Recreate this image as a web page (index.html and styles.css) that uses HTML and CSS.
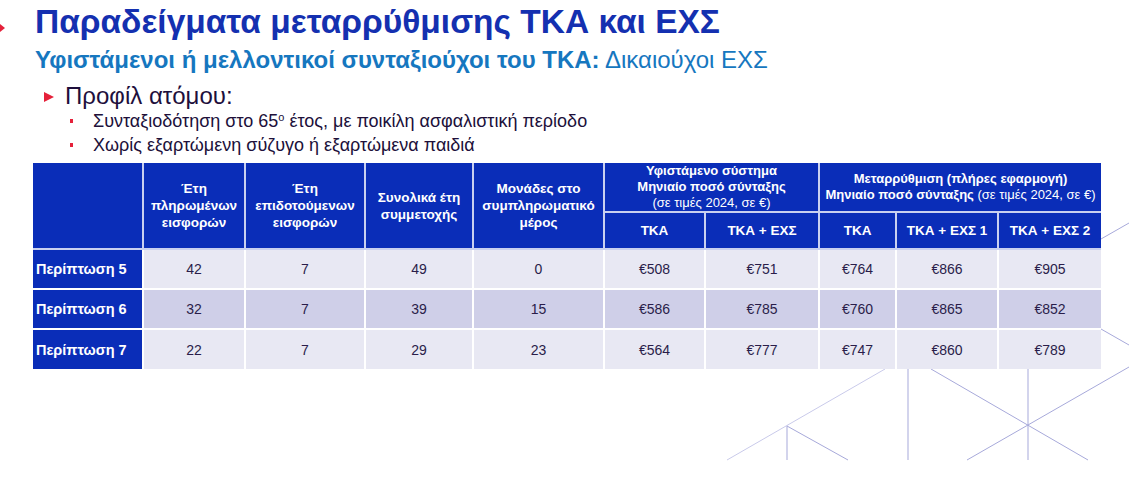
FILE: index.html
```html
<!DOCTYPE html>
<html lang="el">
<head>
<meta charset="utf-8">
<title>Παραδείγματα μεταρρύθμισης ΤΚΑ και ΕΧΣ</title>
<link rel="stylesheet" href="styles.css">
</head>
<body>
<div class="slide">
  <svg class="deco" width="1129" height="497" viewBox="0 0 1129 497" aria-hidden="true">
    <g stroke="#a7a9da" stroke-width="1" fill="none">
      <line x1="727" y1="460" x2="885" y2="369" stroke="#c9caea"/>
      <line x1="787" y1="426" x2="787" y2="460"/>
      <line x1="787" y1="426" x2="848" y2="460"/>
      <line x1="908" y1="369" x2="908" y2="460"/>
      <line x1="931" y1="369" x2="1088" y2="460"/>
      <line x1="967" y1="460" x2="1129" y2="367"/>
      <line x1="1028" y1="369" x2="1028" y2="460"/>
      <line x1="1101" y1="239" x2="1129" y2="223"/>
      <line x1="1101" y1="329" x2="1129" y2="345"/>
    </g>
  </svg>
  <div class="content">
    <header class="title-row">
      <span class="marker"></span>
      <h1 class="title">Παραδείγματα μεταρρύθμισης ΤΚΑ και ΕΧΣ</h1>
    </header>
    <p class="subtitle"><b>Υφιστάμενοι ή μελλοντικοί συνταξιούχοι του ΤΚΑ:</b> Δικαιούχοι ΕΧΣ</p>
    <div class="profile">
      <span class="tri"></span>
      <span>Προφίλ ατόμου:</span>
    </div>
    <ul class="bullets">
      <li>Συνταξιοδότηση στο 65<sup>ο</sup> έτος, με ποικίλη ασφαλιστική περίοδο</li>
      <li>Χωρίς εξαρτώμενη σύζυγο ή εξαρτώμενα παιδιά</li>
    </ul>
    <table class="grid">
      <colgroup>
        <col class="c1"><col class="c2"><col class="c3"><col class="c4"><col class="c5">
        <col class="c6"><col class="c7"><col class="c8"><col class="c9"><col class="c10">
      </colgroup>
      <thead>
        <tr class="h1">
          <th rowspan="2"></th>
          <th rowspan="2">Έτη<br>πληρωμένων<br>εισφορών</th>
          <th rowspan="2">Έτη<br>επιδοτούμενων<br>εισφορών</th>
          <th rowspan="2">Συνολικά έτη<br>συμμετοχής</th>
          <th rowspan="2">Μονάδες στο<br>συμπληρωματικό<br>μέρος</th>
          <th colspan="2" class="grp">Υφιστάμενο σύστημα<br>Μηνιαίο ποσό σύνταξης<br><span class="reg">(σε τιμές 2024, σε €)</span></th>
          <th colspan="3" class="grp">Μεταρρύθμιση (πλήρες εφαρμογή)<br>Μηνιαίο ποσό σύνταξης <span class="reg">(σε τιμές 2024, σε €)</span></th>
        </tr>
        <tr class="h2">
          <th>ΤΚΑ</th>
          <th>ΤΚΑ + ΕΧΣ</th>
          <th>ΤΚΑ</th>
          <th>ΤΚΑ + ΕΧΣ 1</th>
          <th>ΤΚΑ + ΕΧΣ 2</th>
        </tr>
      </thead>
      <tbody>
        <tr class="odd">
          <th>Περίπτωση 5</th>
          <td>42</td><td>7</td><td>49</td><td>0</td>
          <td>€508</td><td>€751</td><td>€764</td><td>€866</td><td>€905</td>
        </tr>
        <tr class="even">
          <th>Περίπτωση 6</th>
          <td>32</td><td>7</td><td>39</td><td>15</td>
          <td>€586</td><td>€785</td><td>€760</td><td>€865</td><td>€852</td>
        </tr>
        <tr class="odd">
          <th>Περίπτωση 7</th>
          <td>22</td><td>7</td><td>29</td><td>23</td>
          <td>€564</td><td>€777</td><td>€747</td><td>€860</td><td>€789</td>
        </tr>
      </tbody>
    </table>
  </div>
</div>
</body>
</html>
```

FILE: styles.css
```css
* { box-sizing: border-box; }
html, body { margin: 0; padding: 0; background: #fff; }
body { font-family: "Liberation Sans", Arial, sans-serif; color: #1e0f3c; }

.slide {
  position: relative;
  width: 1129px;
  height: 497px;
  overflow: hidden;
  background: #fff;
}

.deco {
  position: absolute;
  left: 0;
  top: 0;
}

.content {
  position: relative;
  padding-top: 4px;
}

.title-row {
  display: flex;
  align-items: center;
  height: 36px;
}

.marker {
  width: 0;
  height: 0;
  border-top: 4px solid transparent;
  border-bottom: 4px solid transparent;
  border-left: 5px solid #e5213a;
  margin-right: 30px;
  margin-top: 12px;
}

.title {
  margin: 0;
  font-size: 33.5px;
  line-height: 36px;
  font-weight: bold;
  color: #1430b0;
}

.subtitle {
  margin: 6px 0 0 35px;
  font-size: 24px;
  line-height: 28px;
  color: #1677bf;
}
.subtitle b { font-weight: bold; }

.profile {
  display: flex;
  align-items: center;
  gap: 11px;
  margin: 8px 0 0 44px;
  font-size: 24px;
  line-height: 28px;
  color: #1e0f3c;
}

.tri {
  width: 0;
  height: 0;
  border-top: 5.5px solid transparent;
  border-bottom: 5.5px solid transparent;
  border-left: 10px solid #e5213a;
  margin-top: 1px;
}

.bullets {
  list-style: none;
  margin: 0;
  padding: 0 0 0 70px;
  font-size: 18px;
  line-height: 23.5px;
  color: #20103a;
}
.bullets li::before {
  content: "";
  display: inline-block;
  width: 3px;
  height: 4px;
  background: #e5213a;
  margin-right: 20px;
  vertical-align: 4px;
}
.bullets sup {
  font-size: 11px;
  line-height: 0;
  vertical-align: 6px;
}

.grid {
  margin: 6px 0 0 33px;
  width: 1068px;
  border-collapse: collapse;
  table-layout: fixed;
}
.c1 { width: 110px; }
.c2 { width: 102px; }
.c3 { width: 120px; }
.c4 { width: 108px; }
.c5 { width: 131px; }
.c6 { width: 101px; }
.c7 { width: 114px; }
.c8 { width: 77px; }
.c9 { width: 102px; }
.c10 { width: 103px; }

.grid th, .grid td {
  border: 2px solid #fff;
  padding: 0;
  text-align: center;
}
.grid tr:first-child > * { border-top: none; }
.grid tr > *:first-child { border-left: none; }
.grid tr > *:last-child { border-right: none; }
.grid tbody tr:last-child > * { border-bottom: none; }

.grid thead th {
  background: #0a2db8;
  color: #fff;
  font-size: 13.5px;
  line-height: 17px;
  font-weight: bold;
  border-color: #c9d0f0;
}
.grid thead th.grp { font-size: 13px; line-height: 16px; }
.grid thead .reg { font-weight: normal; }

.grid .h1 { height: 48px; }
.grid .h2 { height: 37px; }

.grid tbody tr { height: 40px; }
.grid tbody th {
  background: #0a2db8;
  color: #fff;
  font-size: 14.5px;
  font-weight: bold;
  text-align: left;
  padding-left: 3px;
}
.grid tbody td {
  font-size: 14px;
  color: #2a1d4a;
}
.grid tbody tr.odd td { background: #e8e8f3; }
.grid tbody tr.even td { background: #cfcfe8; }
```
